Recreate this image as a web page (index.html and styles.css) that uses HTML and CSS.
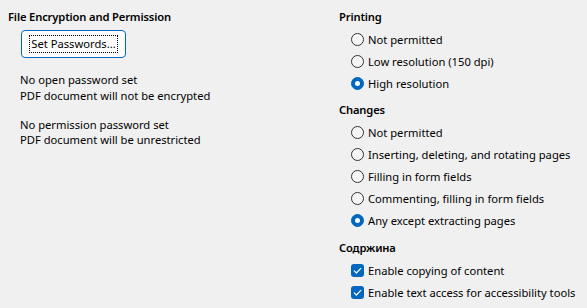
FILE: index.html
```html
<!DOCTYPE html>
<html>
<head>
<meta charset="utf-8">
<link rel="stylesheet" href="styles.css">
</head>
<body>
<div class="page">
  <section class="col left">
    <h2 class="head">File Encryption and Permission</h2>
    <button class="btn"><span class="focus">Set Passwords...</span></button>
    <p class="info">No open password set<br>PDF document will not be encrypted</p>
    <p class="info second">No permission password set<br>PDF document will be unrestricted</p>
  </section>
  <section class="col right">
    <h2 class="head">Printing</h2>
    <div class="opt"><span class="radio"></span>Not permitted</div>
    <div class="opt"><span class="radio"></span>Low resolution (150 dpi)</div>
    <div class="opt"><span class="radio on"></span>High resolution</div>

    <h2 class="head gap">Changes</h2>
    <div class="opt"><span class="radio"></span>Not permitted</div>
    <div class="opt"><span class="radio"></span>Inserting, deleting, and rotating pages</div>
    <div class="opt"><span class="radio"></span>Filling in form fields</div>
    <div class="opt"><span class="radio"></span>Commenting, filling in form fields</div>
    <div class="opt"><span class="radio on"></span>Any except extracting pages</div>

    <h2 class="head gap2">Содржина</h2>
    <div class="opt"><span class="check"><svg viewBox="0 0 13 13" width="13" height="13"><path d="M3.2 6.8 L5.4 9 L9.8 4.3" fill="none" stroke="#fff" stroke-width="1.2" stroke-linecap="round" stroke-linejoin="round"/></svg></span>Enable copying of content</div>
    <div class="opt"><span class="check"><svg viewBox="0 0 13 13" width="13" height="13"><path d="M3.2 6.8 L5.4 9 L9.8 4.3" fill="none" stroke="#fff" stroke-width="1.2" stroke-linecap="round" stroke-linejoin="round"/></svg></span>Enable text access for accessibility tools</div>
  </section>
</div>
</body>
</html>
```

FILE: styles.css
```css
html, body {
  margin: 0;
  padding: 0;
  background: #f0f0f0;
}
body {
  font-family: "Noto Sans", "Open Sans", sans-serif;
  font-size: 11.2px;
  color: #000;
  width: 587px;
  height: 308px;
  overflow: hidden;
}
.page {
  display: flex;
  padding-top: 6px;
}
.col {
  display: flex;
  flex-direction: column;
}
.left {
  width: 331px;
  padding-left: 8px;
}
.right {
  flex: 1;
}
.head {
  margin: 0;
  font-size: 11.2px;
  font-weight: 600;
  letter-spacing: -0.15px;
  height: 22px;
  line-height: 22px;
}
.head.gap { margin-top: 5px; }
.head.gap2 { margin-top: 6px; }
.btn {
  align-self: flex-start;
  margin: 2px 0 0 13px;
  width: 105px;
  height: 28px;
  padding: 0;
  border: 1px solid #0067c0;
  border-radius: 4px;
  background: #fdfdfd;
  font: inherit;
  color: #000;
  display: flex;
  align-items: center;
  justify-content: center;
  box-shadow: inset 0 0 0 1px #fdfdfd;
}
.focus {
  border: 1px dotted #000;
  white-space: nowrap;
  padding: 0 1px;
  height: 16px;
  line-height: 16px;
}
.info {
  margin: 14px 0 0 12px;
  line-height: 16px;
}
.info.second {
  margin-top: 13px;
  line-height: 15px;
}
.opt {
  height: 22px;
  display: flex;
  align-items: center;
  padding-left: 12px;
  white-space: nowrap;
}
.radio {
  width: 11px;
  height: 11px;
  border: 1px solid #333;
  border-radius: 50%;
  background: #f5f5f5;
  margin-right: 4px;
  position: relative;
  flex: none;
}
.radio.on {
  background: #0067c0;
  border-color: #0067c0;
}
.radio.on::after {
  content: "";
  position: absolute;
  left: 3px;
  top: 3px;
  width: 5px;
  height: 5px;
  border-radius: 50%;
  background: #fff;
}
.check {
  width: 13px;
  height: 13px;
  border-radius: 3px;
  background: #0067c0;
  margin-right: 4px;
  flex: none;
  display: flex;
}
```
